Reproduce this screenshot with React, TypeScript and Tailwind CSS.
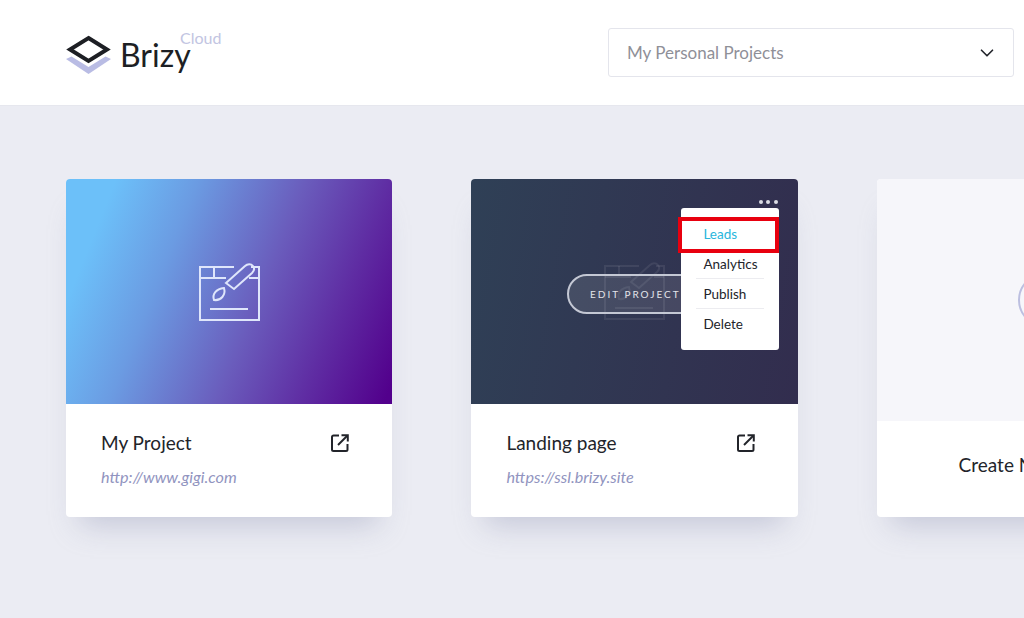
import { ChevronDown } from 'lucide-react';

function Logo() {
  return (
    <svg width="47" height="40" viewBox="0 0 47 40" fill="none">
      <path d="M1 24 6.500 21.500 23.500 32 40.500 21.500 46 24 23.500 39Z" fill="#b9bce4" />
      <path d="M23.500 3 42 14.500 23.500 26 5 14.500Z" stroke="#1d1f24" strokeWidth="4" />
    </svg>
  );
}

function ExternalIcon() {
  return (
    <svg width="18" height="18" viewBox="0 0 18 18" fill="none" stroke="#22242a" strokeWidth="2">
      <path d="M8 1.500H2.500A1.500 1.500 0 0 0 1 3v12.500A1.500 1.500 0 0 0 2.500 17H15a1.500 1.500 0 0 0 1.500-1.500V10" />
      <path d="M7 11 16 2" />
      <path d="M10.500 1.200H16.800V7.500" />
    </svg>
  );
}

function ProjectIcon({ className, stroke }: { className?: string; stroke: string }) {
  return (
    <svg className={className} width="61" height="58" viewBox="0 0 61 58" fill="none" stroke={stroke} strokeWidth="2">
      <path d="M35 4H1v53h59V4h-8" />
      <path d="M1 15h26M50 15h10M15 4v11" />
      <path d="M27 20 46 3C48.500.5 52 .5 54 3c2 2.500 1 5-1 7L35 26Z" />
      <path d="M15 37C13 31 17 26 25 25 27 32 22 38 15 37Z" />
      <path d="M11 46h38" />
    </svg>
  );
}

function ProjectCard({ title, url, children }: { title: string; url: string; children: React.ReactNode }) {
  return (
    <div className="h-[338px] w-[326.4px] shrink-0 rounded-[4px] bg-white shadow-[0_22px_28px_-14px_rgba(150,155,185,0.45)]">
      {children}
      <div className="flex h-[113px] items-start justify-between pl-[35px] pr-[43px] pt-[27px]">
        <div>
          <h3 className="text-[19px] leading-6 text-[#22242a]">{title}</h3>
          <p className="mt-[12px] text-[16.200px] italic leading-5 text-[#9194c0]">{url}</p>
        </div>
        <div className="mt-[3px]">
          <ExternalIcon />
        </div>
      </div>
    </div>
  );
}

const menuItems = ['Analytics', 'Publish'];

export default function App() {
  return (
    <div className="h-[618px] w-[1024px] overflow-hidden bg-[#ebecf3] font-['Lato',sans-serif]">
      <header className="flex h-[106px] items-start justify-between border-b border-[#e6e7ee] bg-white pl-[65px] pr-[10px] pt-[28px]">
        <div className="relative mt-[7px] flex items-center gap-[8px]">
          <Logo />
          <span className="text-[32px] leading-[38px] text-[#1d1f24]">Brizy</span>
          <span className="absolute left-[115px] top-[-7px] text-[16px] leading-5 text-[#c2c5e2]">Cloud</span>
        </div>
        <div className="flex h-[49px] w-[406px] items-center justify-between rounded-[3px] border border-[#e4e5ec] pl-[18px] pr-[15px]">
          <span className="text-[17px] text-[#8f9098]">My Personal Projects</span>
          <ChevronDown size={22} strokeWidth={1.8} className="text-[#22242a]" />
        </div>
      </header>

      <main className="flex gap-[79px] pl-[66px] pt-[73px]">
        <ProjectCard title="My Project" url="http://www.gigi.com">
          <div className="flex h-[225px] items-center justify-center rounded-t-[4px] bg-[linear-gradient(112deg,#6cc0f9_12%,#6b9be2_32%,#6a5cbc_58%,#5f2da3_78%,#52008c_98%)]">
            <ProjectIcon stroke="#dfe6fb" />
          </div>
        </ProjectCard>

        <ProjectCard title="Landing page" url="https://ssl.brizy.site">
          <div className="relative flex h-[225px] items-center justify-center rounded-t-[4px] bg-[linear-gradient(100deg,#2f4056,#322d4e)]">
            <ProjectIcon stroke="rgba(255,255,255,0.08)" className="absolute left-[133px] top-[83px]" />
            <div className="relative mt-[5px] flex h-[40px] w-[135px] items-center rounded-full border-2 border-[#c4c8d4] bg-white/10 pl-[21px] text-[10px] tracking-[2px] text-[#e2e4ea]">
              EDIT PROJECT
            </div>
            <div className="absolute right-[20px] top-[21px] flex gap-[3.500px]">
              <span className="h-[4px] w-[4px] rounded-full bg-[#dcdde4]" />
              <span className="h-[4px] w-[4px] rounded-full bg-[#dcdde4]" />
              <span className="h-[4px] w-[4px] rounded-full bg-[#dcdde4]" />
            </div>
            <div className="absolute left-[210px] top-[29px] h-[142px] w-[98px] rounded-[3px] bg-white pt-[11px] text-[13.500px] text-[#22242a]">
              <div className="absolute left-[-3px] top-[9px] h-[36px] w-[101px] border-4 border-[#e8000f]" />
              <div className="flex h-[30px] items-center pl-[22px] text-[#29b6dc]">Leads</div>
              {menuItems.map((item) => (
                <div key={item} className="mx-[15px] flex h-[30px] items-center border-b border-[#ececf0] pl-[7px] pt-[1px]">
                  {item}
                </div>
              ))}
              <div className="flex h-[30px] items-center pl-[22px]">Delete</div>
            </div>
          </div>
        </ProjectCard>

        <div className="h-[338px] w-[326.4px] shrink-0 rounded-[4px] bg-white shadow-[0_22px_28px_-14px_rgba(150,155,185,0.45)]">
          <div className="flex h-[242px] items-center rounded-t-[4px] bg-[#f6f6fa] pl-[141px]">
            <div className="h-[54px] w-[54px] rounded-full border-2 border-[#bcbfe0]" />
          </div>
          <div className="flex h-[96px] items-center justify-center pb-[8px]">
            <span className="text-[19px] text-[#22242a]">Create New Project</span>
          </div>
        </div>
      </main>
    </div>
  );
}
